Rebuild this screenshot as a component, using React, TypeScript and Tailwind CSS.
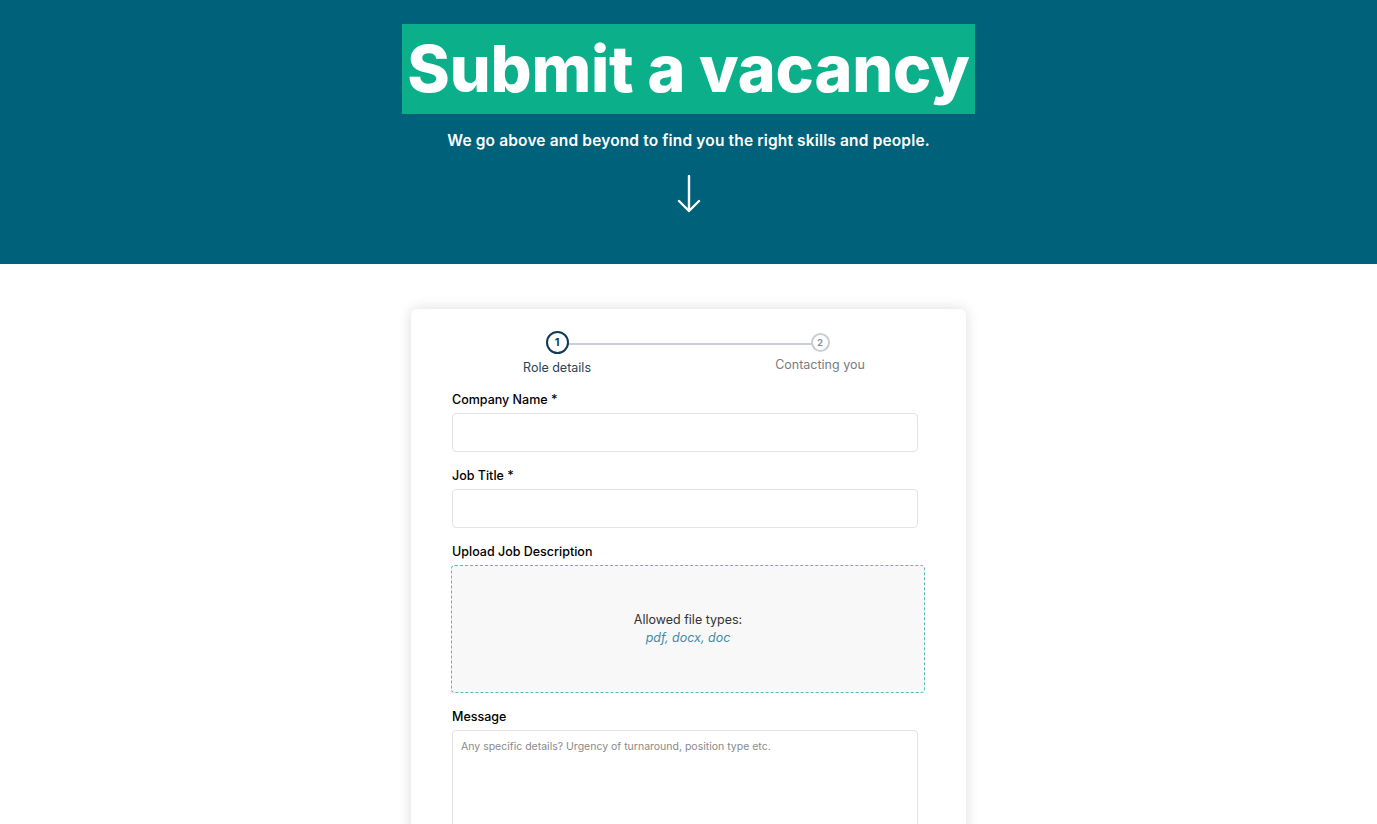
import React from "react";

const Field = ({ label, required }: { label: string; required?: boolean }) => (
  <div className="flex flex-col">
    <label className="text-[12.5px] font-medium text-black leading-[20px] mb-[3px]">
      {label}
      {required && <span> *</span>}
    </label>
    <input
      type="text"
      className="w-[466px] h-[39px] rounded-[4px] border border-[#e3e3e3] bg-white outline-none"
    />
  </div>
);

export default function App() {
  return (
    <div className="min-h-screen bg-white" style={{ fontFamily: "Inter, 'Noto Sans', sans-serif" }}>
      {/* Hero */}
      <header className="bg-[#00617a] h-[264px] flex flex-col items-center pt-[24px]">
        <h1 className="bg-[#0bb08a] h-[90px] px-[5px] flex items-center text-white text-[64.5px] font-extrabold tracking-[-0.2px] leading-none">
          Submit a vacancy
        </h1>
        <p className="mt-[17px] text-white text-[15.5px] font-semibold tracking-[0.15px] leading-[20px]">
          We go above and beyond to find you the right skills and people.
        </p>
        <svg className="mt-[24px]" width="24" height="38" viewBox="0 0 24 38" fill="none">
          <path d="M12 1 V36 M2 26 L12 36 L22 26" stroke="white" strokeWidth="2.4" strokeLinecap="round" strokeLinejoin="round" />
        </svg>
      </header>

      {/* Form card */}
      <main className="flex justify-center pt-[45px]">
        <div className="w-[555px] bg-white rounded-[6px] shadow-[0_0_14px_rgba(0,0,0,0.14)] px-[41px] pt-[22px] pb-[40px]">
          {/* Stepper */}
          <div className="relative h-[59px]">
            <div className="absolute left-[116px] right-[107px] top-[12px] h-[2px] bg-[#c9ced3]" />
            <div className="absolute left-[94px] top-0 w-[42px] flex flex-col items-center -ml-[10px]">
              <div className="w-[23px] h-[23px] rounded-full border-2 border-[#0e3a57] bg-white flex items-center justify-center text-[11px] font-bold text-[#0e3a57]">
                1
              </div>
              <span className="mt-[5px] whitespace-nowrap text-[12.5px] text-[#2b4256]">Role details</span>
            </div>
            <div className="absolute left-[357px] top-[2px] w-[42px] flex flex-col items-center -ml-[10px]">
              <div className="w-[19px] h-[19px] rounded-full border-2 border-[#c9ced3] bg-white flex items-center justify-center text-[9px] font-bold text-[#8a8f94]">
                2
              </div>
              <span className="mt-[4px] whitespace-nowrap text-[12.5px] text-[#777c80]">Contacting you</span>
            </div>
          </div>

          <div className="flex flex-col gap-[14px]">
            <Field label="Company Name" required />
            <Field label="Job Title" required />

            <div className="flex flex-col">
              <label className="text-[12.5px] font-medium text-black leading-[20px] mb-[3px]">
                Upload Job Description
              </label>
              <div className="w-[474px] -ml-[1px] h-[128px] rounded-[4px] border border-dashed border-[#5fb6bd] bg-[#f8f8f8] flex flex-col items-center justify-center">
                <span className="text-[12.5px] text-[#333] leading-[18px]">Allowed file types:</span>
                <span className="text-[12.5px] italic text-[#3e8aa3] leading-[18px]">pdf, docx, doc</span>
              </div>
            </div>

            <div className="flex flex-col">
              <label className="text-[12.5px] font-medium text-black leading-[20px] mb-[3px]">Message</label>
              <textarea
                placeholder="Any specific details? Urgency of turnaround, position type etc."
                className="w-[466px] h-[140px] rounded-[4px] border border-[#e3e3e3] px-[8px] py-[8px] text-[10.5px] text-[#333] placeholder:text-[#8a8a8a] resize-none outline-none"
              />
            </div>
          </div>
        </div>
      </main>
    </div>
  );
}
